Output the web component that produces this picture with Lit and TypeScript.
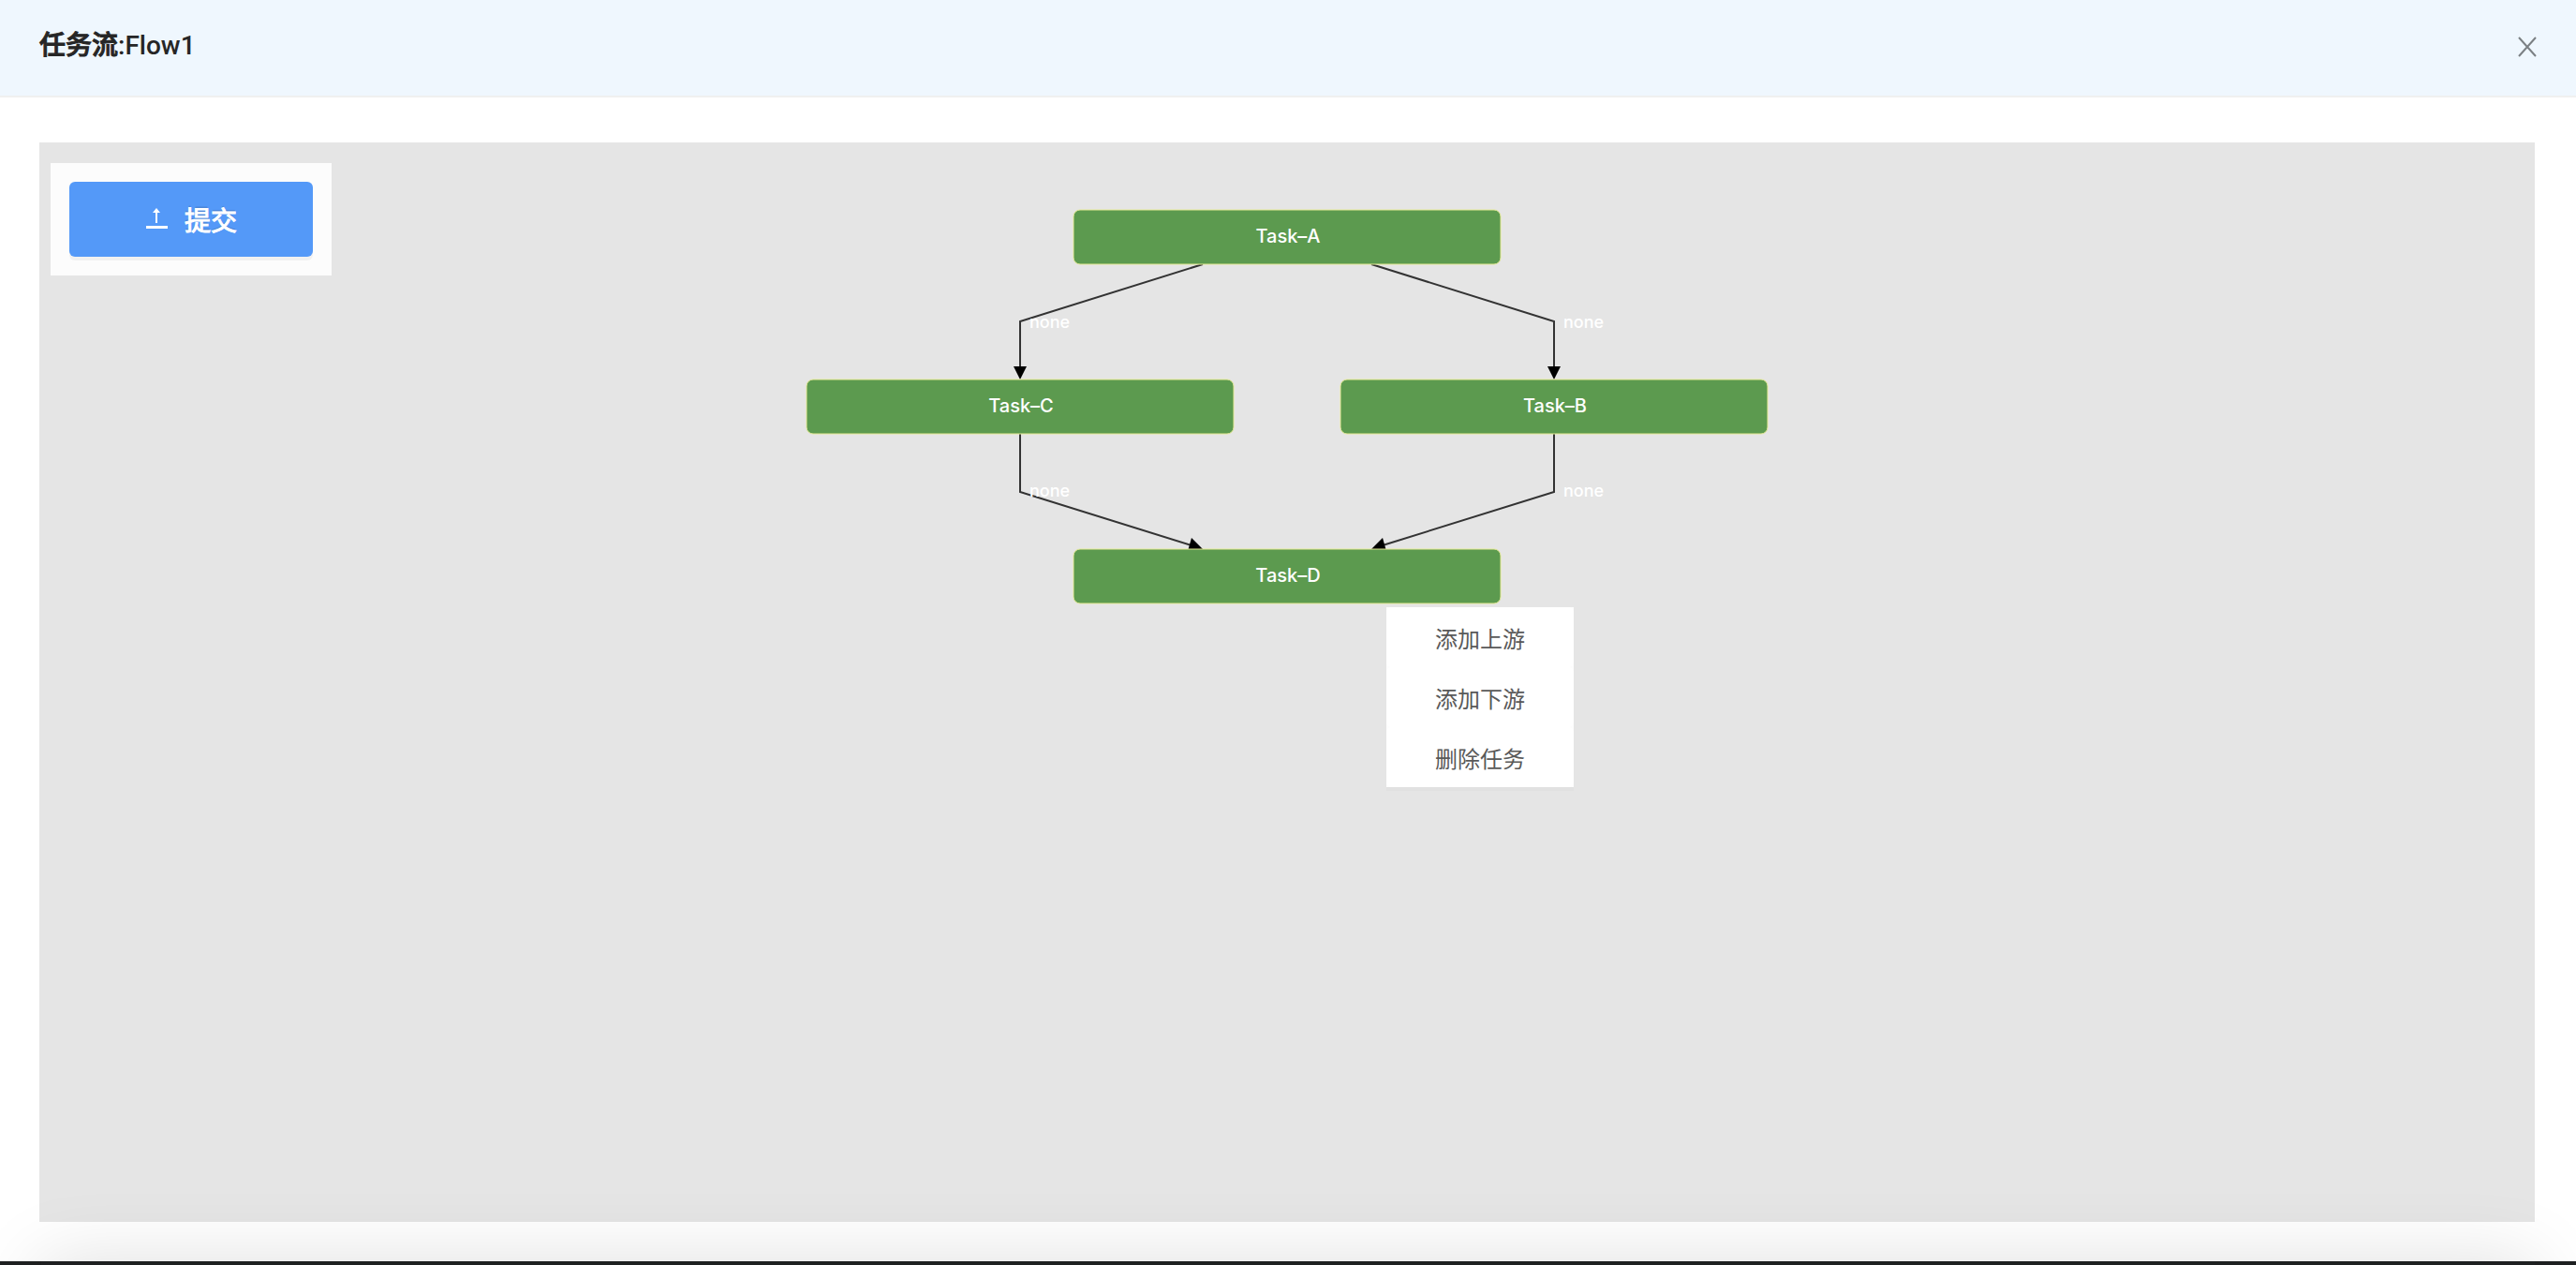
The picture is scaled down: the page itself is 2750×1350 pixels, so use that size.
import { LitElement, html, css, svg } from "lit";
import { customElement, state } from "lit/decorators.js";

interface TaskNode {
  label: string;
  x: number;
  y: number;
}

interface TaskEdge {
  points: string;
  arrow: string;
  labelX: number;
  labelY: number;
}

const NODE_W = 456;
const NODE_H = 58;

const NODES: TaskNode[] = [
  { label: "Task–A", x: 286, y: 0 },
  { label: "Task–C", x: 1, y: 181 },
  { label: "Task–B", x: 571, y: 181 },
  { label: "Task–D", x: 286, y: 362 },
];

const EDGES: TaskEdge[] = [
  { points: "424,58 229,119 229,170", arrow: "222,167 236,167 229,181", labelX: 239, labelY: 126 },
  { points: "604,58 799,119 799,170", arrow: "792,167 806,167 799,181", labelX: 809, labelY: 126 },
  { points: "229,239 229,301 412,358", arrow: "412,350 408,364 424,362", labelX: 239, labelY: 306 },
  { points: "799,239 799,301 616,358", arrow: "616,350 620,364 604,362", labelX: 809, labelY: 306 },
];

const MENU = ["添加上游", "添加下游", "删除任务"];

@customElement("flow-graph")
export class FlowGraph extends LitElement {
  static styles = css`
    :host {
      display: block;
    }
    .graph {
      display: block;
      overflow: visible;
    }
    .node {
      fill: #5c9a4f;
      stroke: #e6ea96;
      stroke-width: 1;
    }
    .text {
      fill: #fff;
      font: 500 18px Inter, "Noto Sans CJK SC", sans-serif;
    }
    .title {
      font-size: 20px;
      text-anchor: middle;
    }
    .edge {
      fill: none;
      stroke: #333;
      stroke-width: 2;
    }
    .arrow {
      fill: #000;
    }
  `;

  render() {
    return html`
      <svg class="graph" width="1028" height="420" role="img" aria-label="Flow1">
        ${EDGES.map(
          (e) => svg`
            <polyline class="edge" points=${e.points}></polyline>
            <polygon class="arrow" points=${e.arrow}></polygon>
            <text class="text" x=${e.labelX} y=${e.labelY}>none</text>`
        )}
        ${NODES.map(
          (n) => svg`
            <rect class="node" x=${n.x} y=${n.y} width=${NODE_W} height=${NODE_H} rx="7"></rect>
            <text class="text title" x=${n.x + NODE_W / 2 + 1} y=${n.y + 35}>${n.label}</text>`
        )}
      </svg>
    `;
  }
}

@customElement("app-root")
export class AppRoot extends LitElement {
  @state() private menuOpen = true;

  static styles = css`
    :host {
      display: flex;
      flex-direction: column;
      position: relative;
      height: 100vh;
      overflow: hidden;
      background: #fff;
      font-family: Roboto, "Noto Sans CJK SC", sans-serif;
    }
    button {
      margin: 0;
      padding: 0;
      border: 0;
      font-family: inherit;
      cursor: pointer;
    }
    .header {
      display: flex;
      justify-content: space-between;
      align-items: flex-start;
      padding: 27px 42px 31px;
      background: #eff7fe;
      border-bottom: 2px solid #f0f0f0;
    }
    .heading {
      margin: 0;
      font-size: 28px;
      line-height: 44px;
      font-weight: 500;
      color: #262626;
    }
    .kind {
      -webkit-text-stroke: 1px #262626;
    }
    .close {
      display: flex;
      align-items: center;
      height: 44px;
      padding-top: 2px;
      background: none;
    }
    .body {
      display: flex;
      flex: 1;
      padding: 48px 44px 42px 42px;
    }
    .canvas {
      position: relative;
      display: flex;
      flex: 1;
      justify-content: center;
      align-items: flex-start;
      padding-top: 72px;
      background: #e5e5e5;
    }
    .stage {
      position: relative;
    }
    .toolbar {
      position: absolute;
      left: 12px;
      top: 22px;
      padding: 20px;
      background: #fcfcfc;
    }
    .submit {
      display: flex;
      align-items: center;
      justify-content: center;
      gap: 18px;
      width: 260px;
      height: 80px;
      border-radius: 6px;
      background: #5499f8;
      color: #fff;
      font-size: 28px;
      -webkit-text-stroke: 1px #fff;
      text-shadow: 0 -2px 0 rgba(0, 0, 0, 0.12);
      box-shadow: 0 4px 0 rgba(0, 0, 0, 0.045);
    }
    .menu {
      position: absolute;
      left: 620px;
      top: 424px;
      display: flex;
      flex-direction: column;
      width: 200px;
      background: #fdfdfd;
      box-shadow: 0 4px 0 rgba(0, 0, 0, 0.015);
    }
    .item {
      height: 64px;
      border-radius: 6px;
      background: #fff;
      color: #595959;
      font-size: 24px;
    }
    .edge-bar {
      position: relative;
      height: 4px;
      background: #1f2122;
    }
    .edge-bar::before {
      content: "";
      position: absolute;
      left: 44px;
      right: 44px;
      top: 0;
      height: 200px;
      box-shadow: 0 0 80px rgba(0, 0, 0, 0.13);
    }
  `;

  render() {
    return html`
      <header class="header">
        <h1 class="heading"><span class="kind">任务流</span>:Flow1</h1>
        <button class="close" aria-label="关闭">
          <svg width="20" height="22" viewBox="0 0 20 22" fill="none" stroke="#7b8084" stroke-width="2">
            <path d="M1 1L19 21M19 1L1 21"></path>
          </svg>
        </button>
      </header>
      <main class="body">
        <section class="canvas">
          <div class="stage">
            <flow-graph></flow-graph>
            ${this.menuOpen
              ? html`<div class="menu">
                  ${MENU.map((m) => html`<button class="item" @click=${() => (this.menuOpen = false)}>${m}</button>`)}
                </div>`
              : null}
          </div>
          <div class="toolbar">
            <button class="submit">
              <svg width="24" height="24" viewBox="0 0 24 24" fill="#fff" aria-hidden="true">
                <path d="M12 0L16 5H13V16H11V5H8Z"></path>
                <path d="M1 19H24V22H1Z"></path>
              </svg>
              <span>提交</span>
            </button>
          </div>
        </section>
      </main>
      <div class="edge-bar"></div>
    `;
  }
}
